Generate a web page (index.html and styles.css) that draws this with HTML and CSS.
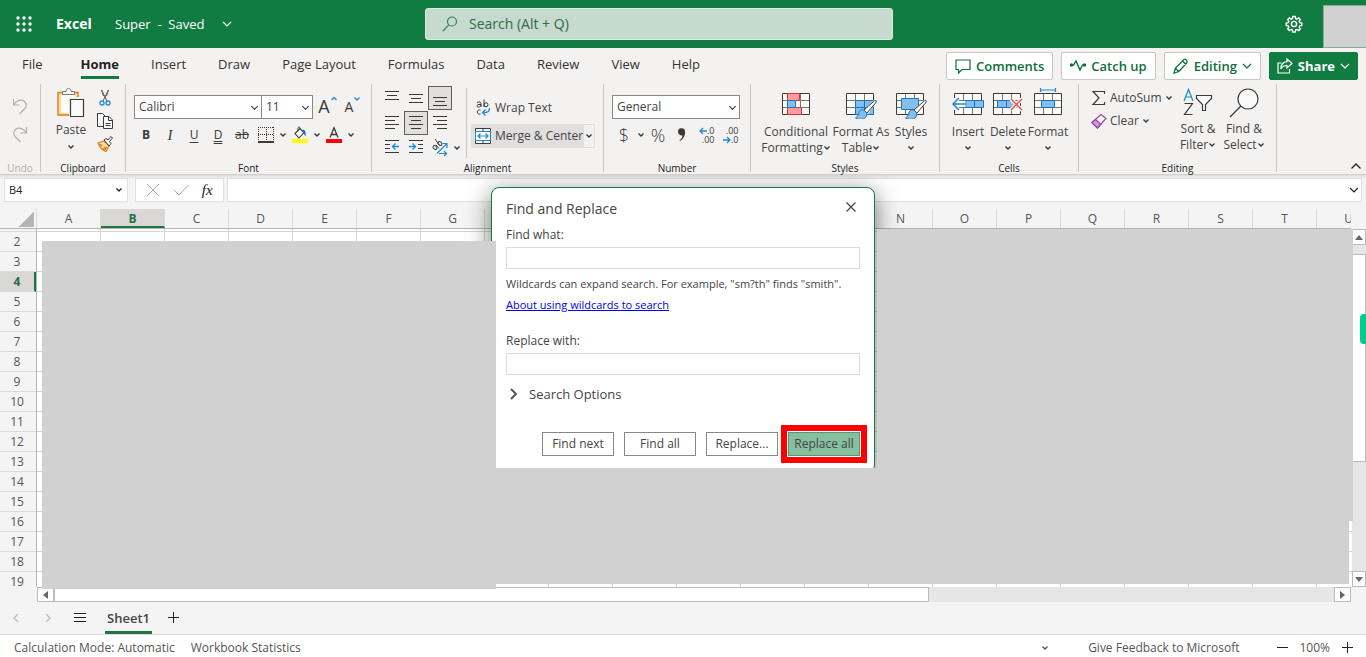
FILE: index.html
```html
<!DOCTYPE html>
<html lang="en">
<head>
<meta charset="utf-8">
<meta name="viewport" content="width=device-width, initial-scale=1">
<title>Super - Excel</title>
<link rel="stylesheet" href="styles.css">
</head>
<body>
<svg class="defs" aria-hidden="true">
  <symbol id="chev" viewBox="0 0 8 8"><path d="M1.5 2.5 4 5l2.5-2.5" fill="none" stroke="currentColor" stroke-width="1.3"/></symbol>
  <symbol id="chev-lg" viewBox="0 0 10 10"><path d="M1 3l4 4 4-4" fill="none" stroke="currentColor" stroke-width="1.2"/></symbol>
  <symbol id="table" viewBox="0 0 30 30"><path d="M1.5 4.500h27v21h-27z" fill="#fafafa"/><path d="M1.500 11.500h27M1.500 18.500h27M10.500 4.500v21M19.500 4.500v21" fill="none" stroke="#797774"/><path d="M1.500 4.500h27v21h-27z" fill="none" stroke="#3a3a38"/></symbol>
  <symbol id="brush" viewBox="0 0 32 30"><path d="M31 9 17 23l4 4 11-14z" fill="#f3f2f1"/><path d="M30.500 11.500c1.200 0 1 1.200 0 2.500l-8.500 10-3-3 9-8c1-.8 2-1.500 2.500-1.500z" fill="#fff" stroke="#3a3a38"/><path d="M18.500 21c-4-.5-4.500 2-5 4-.4 1.700-1.500 3-3 4 4 2.500 9.500 1.500 11-2 .9-2.500-.5-5-3-6z" fill="#83beec" stroke="#1c75bc"/></symbol>
</svg>

<header class="topbar">
  <button class="waffle" aria-label="App launcher"><svg width="16" height="16" viewBox="0 0 16 16" fill="#fff"><circle cx="2" cy="2" r="1.700"/><circle cx="8" cy="2" r="1.700"/><circle cx="14" cy="2" r="1.700"/><circle cx="2" cy="8" r="1.700"/><circle cx="8" cy="8" r="1.700"/><circle cx="14" cy="8" r="1.700"/><circle cx="2" cy="14" r="1.700"/><circle cx="8" cy="14" r="1.700"/><circle cx="14" cy="14" r="1.700"/></svg></button>
  <span class="app">Excel</span>
  <button class="doc"><span>Super&nbsp; -&nbsp; Saved</span><svg width="10" height="10"><use href="#chev-lg"/></svg></button>
  <label class="search"><svg width="16" height="16" viewBox="0 0 16 16" fill="none" stroke="#3e7d57" stroke-width="1.200"><circle cx="10" cy="5.500" r="4.500"/><path d="M6.800 8.800 1 15"/></svg><input type="text" aria-label="Search" placeholder="Search (Alt + Q)"></label>
  <button class="gear" aria-label="Settings"><svg width="18" height="18" viewBox="0 0 18 18" fill="none" stroke="#fff" stroke-width="1.400"><path d="M7.800 1.500h2.400l.4 2 1.300.6 1.800-1.100 1.600 1.600-1.100 1.800.6 1.300 2 .4v2.400l-2 .4-.6 1.300 1.100 1.800-1.600 1.600-1.800-1.100-1.300.6-.4 2H7.800l-.4-2-1.300-.6-1.800 1.100L2.700 14l1.100-1.800-.6-1.300-2-.4V8.100l2-.4.6-1.300-1.100-1.800L4.300 3l1.800 1.100 1.300-.6z"/><circle cx="9" cy="9" r="2.600"/></svg></button>
  <div class="account"></div>
</header>

<nav class="tabs">
  <a class="file" href="#">File</a><a class="on" href="#">Home</a><a href="#">Insert</a><a href="#">Draw</a><a href="#">Page Layout</a><a href="#">Formulas</a><a href="#">Data</a><a href="#">Review</a><a href="#">View</a><a href="#">Help</a>
  <div class="actions">
    <button class="act"><svg width="16" height="16" viewBox="0 0 16 16" fill="none" stroke="currentColor" stroke-width="1.200"><path d="M1 2h14v9.500H7L3.500 15v-3.500H1z"/></svg>Comments</button>
    <button class="act"><svg width="16" height="16" viewBox="0 0 16 16" fill="none" stroke="currentColor" stroke-width="1.400"><path d="M1 7h2.500L6 3l4 9 2.500-5H15"/><circle cx="1.500" cy="7" r="1" fill="currentColor"/><circle cx="14.500" cy="7" r="1" fill="currentColor"/></svg>Catch up</button>
    <button class="act"><svg width="16" height="16" viewBox="0 0 16 16" fill="none" stroke="currentColor" stroke-width="1.300"><path d="M1 15l1.500-5L11 1.500c1-1 4 1.500 3 3L6 13.500zM9.500 3l3.500 3.500M2.500 10.500 5.800 13.500"/></svg>Editing<svg width="10" height="10"><use href="#chev-lg"/></svg></button>
    <button class="act share"><svg width="16" height="16" viewBox="0 0 16 16" fill="none" stroke="currentColor" stroke-width="1.200"><path d="M4.500 5H1v10h11.500v-4M10 1l5 4.500-5 4.500V7.500C7 7.500 5 8.500 3.800 11 4 7 6 4 10 3.700z"/></svg>Share<svg width="10" height="10"><use href="#chev-lg"/></svg></button>
  </div>
</nav>

<div class="ribbon">
  <section class="group g-undo">
    <div class="body">
      <button aria-label="Undo"><svg width="18" height="18" viewBox="0 0 18 18" fill="none" stroke="#b3b0ad" stroke-width="1.200"><path d="M2.500 2v6h6M2.500 8c3-5 8-6 11-3.500 3 3 2 5.500 0 7.500L8.500 17"/></svg></button>
      <button aria-label="Redo"><svg width="18" height="18" viewBox="0 0 18 18" fill="none" stroke="#b3b0ad" stroke-width="1.200"><path d="M15.500 2v6h-6M15.500 8c-3-5-8-6-11-3.500-3 3-2 5.500 0 7.500l5 5"/></svg></button>
    </div>
    <h2>Undo</h2>
  </section>

  <section class="group g-clip">
    <div class="body">
      <button class="big"><svg width="30" height="32" viewBox="0 0 30 32"><path d="M2 5.500h20V28H2z" fill="#fbdd8f" stroke="#e07b1a" stroke-width="1.400"/><path d="M5 8h14v18H5z" fill="#fafafa"/><path d="M6.500 7.500v-3h3.500c0-4 5-4 5 0h3.500v3z" fill="#fafafa" stroke="#797774"/><path d="M13 10h17v20H13z" fill="#f3f2f1"/><path d="M14.500 12.500h13v17h-13z" fill="#fafafa" stroke="#3a3a38" stroke-width="1.200"/></svg><span>Paste</span><svg class="c" width="8" height="8"><use href="#chev"/></svg></button>
      <div class="stack">
        <button aria-label="Cut"><svg width="16" height="16" viewBox="0 0 16 16" fill="none" stroke="#555"><path d="M4.500 0 10 11M11.500 0 6 11"/><path d="M4.500 0l2 6M11.500 0l-2 6"/><circle cx="5" cy="13" r="2" stroke="#1e8bcd" stroke-width="1.300"/><circle cx="11" cy="13" r="2" stroke="#1e8bcd" stroke-width="1.300"/></svg></button>
        <button aria-label="Copy"><svg width="18" height="18" viewBox="0 0 18 18" fill="#fafafa" stroke="#3a3a38"><path d="M7.500 14.500h-6v-13h5l3 3"/><path d="M7.500 4.500h5.500l3.500 3.500v8.500h-9zM12.500 4.500v4h4M9.500 11.500h5M9.500 13.500h5"/></svg></button>
        <button aria-label="Format Painter"><svg width="16" height="16" viewBox="0 0 16 16"><path d="M1 7l6-2 5 5-3 5.500C5 14 3 12 1 7z" fill="#fbe3a4" stroke="#e07b1a" stroke-width="1.200"/><path d="M5 13l4-3 1 2-2 3zM1 7l5 2-2 2z" fill="#e8832a"/><path d="M7 4l2-1.500 2 1.500 3-3.500 1.500 1.500L12.500 5.500l1.500 2-2 2.500z" fill="#fafafa" stroke="#3a3a38"/></svg></button>
      </div>
    </div>
    <h2>Clipboard</h2>
  </section>

  <section class="group g-font">
    <div class="body">
      <div class="line top">
        <span class="sel name"><select aria-label="Font"><option>Calibri</option></select></span><span class="sel size"><select aria-label="Font size"><option>11</option></select></span>
        <button class="ib grow" aria-label="Grow font"><b>A</b><svg width="8" height="8" viewBox="0 0 8 8"><path d="M1.500 5 4 2.500 6.500 5" fill="none" stroke="#1e8bcd" stroke-width="1.300"/></svg></button>
        <button class="ib grow small" aria-label="Shrink font"><b>A</b><svg class="blue" width="8" height="8"><use href="#chev"/></svg></button>
      </div>
      <div class="line">
        <button class="ib bold">B</button><button class="ib ital">I</button><button class="ib und">U</button><button class="ib dbl">D</button><button class="ib strike">ab</button>
        <button class="ib" aria-label="Borders"><svg width="16" height="16" viewBox="0 0 16 16" fill="none" stroke="#3a3a38"><path d="M.5 0v14M15.500 0v14M8.500 0v14M0 .5h16M0 7.500h16" stroke-dasharray="1 1" shape-rendering="crispEdges"/><path d="M0 15h16" stroke="#000" stroke-width="1.500"/></svg></button>
        <svg class="c n" width="8" height="8"><use href="#chev"/></svg>
        <button class="ib" aria-label="Fill colour"><svg width="16" height="16" viewBox="0 0 16 16"><path d="M3 6.500 8 1.500l4 4-5 5.500z" fill="#fafafa" stroke="#3a3a38" stroke-width="1.100"/><path d="M6 4V1.500C6-.5 8-.5 8 1.500" fill="none" stroke="#3a3a38"/><path d="M10.500 2.500c3 0 3.500 3 3 7-1-1-1.500-3-3-4.500z" fill="#1670b8"/><path d="M0 12h16v4H0z" fill="#ff0"/></svg></button>
        <svg class="c n" width="8" height="8"><use href="#chev"/></svg>
        <button class="ib" aria-label="Font colour"><svg width="16" height="16" viewBox="0 0 16 16"><path d="M4 10.500 8 .8l4 9.700M5.500 7.500h5" fill="none" stroke="#3a3a38" stroke-width="1.300"/><path d="M0 12h16v4H0z" fill="#f00"/></svg></button>
        <svg class="c n" width="8" height="8"><use href="#chev"/></svg>
      </div>
    </div>
    <h2>Font</h2>
  </section>

  <section class="group g-align">
    <div class="body">
      <div class="aligns">
        <button class="ib" aria-label="Top align"><svg width="16" height="16" viewBox="0 0 16 16" stroke="#3a3a38"><path d="M1 1.500h14M3 5.500h10M1 9.500h14"/></svg></button>
        <button class="ib" aria-label="Middle align"><svg width="16" height="16" viewBox="0 0 16 16" stroke="#3a3a38"><path d="M1 4.500h14M3 8.500h10M1 12.500h14"/></svg></button>
        <button class="ib pressed" aria-label="Bottom align"><svg width="16" height="16" viewBox="0 0 16 16" stroke="#3a3a38"><path d="M1 7.500h14M3 11.500h10M1 15.500h14"/></svg></button>
        <button class="ib" aria-label="Align left"><svg width="16" height="16" viewBox="0 0 16 16" stroke="#3a3a38"><path d="M1 1.500h14M1 5.500h10M1 9.500h14M1 13.500h10"/></svg></button>
        <button class="ib pressed" aria-label="Centre"><svg width="16" height="16" viewBox="0 0 16 16" stroke="#3a3a38"><path d="M1 1.500h14M3 5.500h10M1 9.500h14M3 13.500h10"/></svg></button>
        <button class="ib" aria-label="Align right"><svg width="16" height="16" viewBox="0 0 16 16" stroke="#3a3a38"><path d="M1 1.500h14M5 5.500h10M1 9.500h14M5 13.500h10"/></svg></button>
        <button class="ib" aria-label="Decrease indent"><svg width="16" height="16" viewBox="0 0 16 16" fill="none" stroke="#3a3a38"><path d="M1 .5h14M1 4.500h5M1 8.500h5M1 12.500h14"/><path d="M15 6.500H9M11.500 3.500l-3 3 3 3" stroke="#1e8bcd" stroke-width="1.300"/></svg></button>
        <button class="ib" aria-label="Increase indent"><svg width="16" height="16" viewBox="0 0 16 16" fill="none" stroke="#3a3a38"><path d="M1 .5h14M10 4.500h5M10 8.500h5M1 12.500h14"/><path d="M1 6.500h6M4.500 3.500l3 3-3 3" stroke="#1e8bcd" stroke-width="1.300"/></svg></button>
        <button class="ib" aria-label="Orientation"><svg width="18" height="18" viewBox="0 0 18 18" fill="none" stroke="#3a3a38"><ellipse cx="4" cy="8.500" rx="1.700" ry="2.200" transform="rotate(-45 4 8.500)"/><path d="M4.800 5.800 8 9.500"/><ellipse cx="9" cy="4.500" rx="1.700" ry="2.200" transform="rotate(-45 9 4.500)"/><path d="M4 0l4.500 6.500"/><path d="M6 14.500 16 4.500M11.500 4.500H16V9M8 14.500h7M13 12l2.500 2.500L13 17" stroke="#1e8bcd" stroke-width="1.200"/></svg></button>
        <svg class="c n" width="8" height="8"><use href="#chev"/></svg>
      </div>
      <div class="wraps">
        <button class="wide"><svg width="16" height="18" viewBox="0 0 16 18" fill="none" stroke="#3a3a38"><path d="M2 3.500c3-1.500 4 0 4 1V8M6 5.500c-5-.5-5 2.500-2.500 2.500 1.500 0 2.500-1 2.500-2"/><path d="M9 .5V8"/><circle cx="11" cy="5.800" r="2"/><path d="M5.500 11c-4-1.500-4 5.500 0 4"/><path d="M14.500 9c0 4-2 4.500-6 4.500M10.500 10.500l-3 3 3 3" stroke="#1e8bcd" stroke-width="1.300"/></svg>Wrap Text</button>
        <div class="merge">
          <button class="wide"><svg width="16" height="16" viewBox="0 0 16 16" fill="none"><path d="M.5.500h15v15H.5z" fill="#fafafa" stroke="#3a3a38"/><path d="M0 3.500h16M0 12.500h16M8 0v4M8 12v4" stroke="#3a3a38"/><path d="M.5 3.500h15v9H.5z" fill="#fff" stroke="#1e8bcd"/><path d="M3 8h10M5.500 5.500 3 8l2.500 2.500M10.500 5.500 13 8l-2.500 2.500" stroke="#1e8bcd" stroke-width="1.200"/></svg>Merge &amp; Center</button>
          <button class="drop" aria-label="Merge options"><svg class="c" width="8" height="8"><use href="#chev"/></svg></button>
        </div>
      </div>
    </div>
    <h2>Alignment</h2>
  </section>

  <section class="group g-num">
    <div class="body">
      <div class="line top"><span class="sel fmt"><select aria-label="Number format"><option>General</option></select></span></div>
      <div class="line">
        <button class="ib sym">$</button><svg class="c n" width="8" height="8"><use href="#chev"/></svg>
        <button class="ib sym">%</button>
        <button class="ib" aria-label="Comma style"><svg width="10" height="14" viewBox="0 0 10 14"><path d="M1 4a3.500 3.500 0 0 1 7-.5c.5 4-2 8-5 9.500l-.5-1c2-1 3-3 3-4.800C3 8 1 6 1 4z" fill="#3a3a38"/></svg></button>
        <button class="ib dec" aria-label="Increase decimal"><span><svg width="8" height="8" viewBox="0 0 8 8" fill="none" stroke="#1e8bcd" stroke-width="1.300"><path d="M8 4H1M4 1 1 4l3 3"/></svg>.0</span><span>.00</span></button>
        <button class="ib dec" aria-label="Decrease decimal"><span>.00</span><span><svg width="8" height="8" viewBox="0 0 8 8" fill="none" stroke="#1e8bcd" stroke-width="1.300"><path d="M0 4h7M4 1l3 3-3 3"/></svg>.0</span></button>
      </div>
    </div>
    <h2>Number</h2>
  </section>

  <section class="group g-styles">
    <div class="body">
      <button class="big w70"><svg width="30" height="30" viewBox="0 0 30 30"><use href="#table"/><path d="M6.500 4.500h12v7h-12zM6.500 18.500h14v7h-14z" fill="#ff9ba3" stroke="#d8342f"/><path d="M6.500 11.500h8v7h-8z" fill="#83beec" stroke="#1c75bc"/></svg><span>Conditional<br>Formatting<svg class="c" width="8" height="8"><use href="#chev"/></svg></span></button>
      <button class="big w60"><svg width="32" height="30" viewBox="0 0 32 30"><use href="#table" width="30" height="30"/><path d="M10.500 11.500h18v14h-18z" fill="#83beec"/><path d="M10.500 11.500h18v14h-18zM19.500 11.500v14M10.500 18.500h18" fill="none" stroke="#1c75bc"/><use href="#brush" width="32" height="30"/></svg><span>Format As<br>Table<svg class="c" width="8" height="8"><use href="#chev"/></svg></span></button>
      <button class="big w40"><svg width="32" height="30" viewBox="0 0 32 30"><use href="#table" width="30" height="30"/><path d="M6.500 9.500h17v11h-17z" fill="#83beec" stroke="#1c75bc"/><use href="#brush" width="32" height="30"/></svg><span>Styles</span><svg class="c" width="8" height="8"><use href="#chev"/></svg></button>
    </div>
    <h2>Styles</h2>
  </section>

  <section class="group g-cells">
    <div class="body">
      <button class="big w40"><svg width="32" height="30" viewBox="0 0 32 30"><use href="#table" x="1" width="30" height="30"/><path d="M12.500 11.500h19v7h-19zM22.500 11.500v7" fill="#83beec" stroke="#1c75bc"/><path d="M0 9h7v12H0z" fill="#f3f2f1"/><path d="M6 12h7v6H6z" fill="#fff"/><path d="M14 15H1M7 9l-6 6 6 6" fill="none" stroke="#1e8bcd" stroke-width="1.500"/></svg><span>Insert</span><svg class="c" width="8" height="8"><use href="#chev"/></svg></button>
      <button class="big w40"><svg width="32" height="30" viewBox="0 0 32 30"><use href="#table" width="30" height="30"/><path d="M5.500 11.500h9v7h-9zM14.500 11.500h5l3 3.500-3 3.500h-5z" fill="#83beec" stroke="#1c75bc"/><path d="M19 10l11 11M30 10 19 21" stroke="#f3f2f1" stroke-width="4"/><path d="M19 10l11 11M30 10 19 21" stroke="#e8514c" stroke-width="1.400"/></svg><span>Delete</span><svg class="c" width="8" height="8"><use href="#chev"/></svg></button>
      <button class="big w40"><svg width="30" height="30" viewBox="0 0 30 30"><use href="#table"/><path d="M8.500 11.500h13v7h-13z" fill="#83beec" stroke="#1c75bc"/><path d="M7.500-1v4M22.500-1v4M7 1h15" stroke="#1e8bcd" stroke-width="1.200"/></svg><span>Format</span><svg class="c" width="8" height="8"><use href="#chev"/></svg></button>
    </div>
    <h2>Cells</h2>
  </section>

  <section class="group g-edit">
    <div class="body">
      <div class="sums">
        <button class="wide"><svg width="16" height="16" viewBox="0 0 16 16" fill="none" stroke="#3a3a38" stroke-width="1.200"><path d="M13.500 4V1.500H2L8 8l-6 6.500h11.500V12"/></svg>AutoSum<svg class="c" width="8" height="8"><use href="#chev"/></svg></button>
        <button class="wide"><svg width="16" height="16" viewBox="0 0 16 16" stroke="#9a3fa5" stroke-width="1.200"><path d="M1 9.500 10 1.500l5 4L6.500 15z" fill="#fafafa"/><path d="M1 9.500 4.500 6.500 9.800 11.200 6.500 15z" fill="#d59adb"/></svg>Clear<svg class="c" width="8" height="8"><use href="#chev"/></svg></button>
      </div>
      <button class="big w46"><svg width="30" height="30" viewBox="0 0 30 30" fill="none" stroke="#3a3a38" stroke-width="1.200"><path d="M1 13 5.500 1.500 10 13M2.500 9h6" stroke="#1e8bcd"/><path d="M1.500 15.500h8l-8 11h8"/><path d="M13.500 7.500h15v3l-6 6v6h-3v-6l-6-6z" fill="#fafafa"/></svg><span>Sort &amp;<br>Filter<svg class="c" width="8" height="8"><use href="#chev"/></svg></span></button>
      <button class="big w46"><svg width="30" height="30" viewBox="0 0 30 30" fill="none" stroke="#3a3a38" stroke-width="1.200"><circle cx="19" cy="11" r="10" fill="#fafafa"/><path d="M12 18 1 29"/></svg><span>Find &amp;<br>Select<svg class="c" width="8" height="8"><use href="#chev"/></svg></span></button>
    </div>
    <h2>Editing</h2>
  </section>
  <button class="collapse" aria-label="Collapse ribbon"><svg width="12" height="8" viewBox="0 0 12 8"><path d="M1.500 6.500 6 2l4.500 4.500" fill="none" stroke="#222" stroke-width="1.300"/></svg></button>
</div>

<div class="fbar">
  <label class="namebox"><input type="text" aria-label="Name box" value="B4"><svg width="8" height="8"><use href="#chev"/></svg></label>
  <div class="fbtns">
    <button aria-label="Cancel"><svg width="14" height="14" viewBox="0 0 14 14" stroke="#aaa"><path d="M1 1l12 12M13 1 1 13"/></svg></button>
    <button aria-label="Enter"><svg width="16" height="14" viewBox="0 0 16 14" fill="none" stroke="#aaa"><path d="M1 7l5 5L15.500 2"/></svg></button>
    <button class="fx">fx</button>
  </div>
  <label class="formula"><input type="text" aria-label="Formula bar"><svg width="10" height="10"><use href="#chev-lg"/></svg></label>
</div>

<main class="sheet">
  <div class="colhead">
    <div class="corner"></div>
    <div>A</div><div class="cur">B</div><div>C</div><div>D</div><div>E</div><div>F</div><div>G</div><div></div><div></div><div></div><div></div><div></div><div></div><div>N</div><div>O</div><div>P</div><div>Q</div><div>R</div><div>S</div><div>T</div><div>U</div>
  </div>
  <div class="middle">
    <div class="rowhead"><div class="stub"></div><div>2</div><div>3</div><div class="cur">4</div><div>5</div><div>6</div><div>7</div><div>8</div><div>9</div><div>10</div><div>11</div><div>12</div><div>13</div><div>14</div><div>15</div><div>16</div><div>17</div><div>18</div><div>19</div></div>
    <div class="cells"></div>
    <div class="vscroll"><button aria-label="Scroll up"><i class="up"></i></button><div class="thumb"></div><button aria-label="Scroll down"><i class="down"></i></button></div>
  </div>
  <div class="hscroll"><button aria-label="Scroll left"><i class="left"></i></button><div class="thumb"></div><button aria-label="Scroll right"><i class="right"></i></button></div>

  <div class="dialog" role="dialog" aria-labelledby="dlg-title">
    <div class="dhead"><h1 id="dlg-title">Find and Replace</h1><button aria-label="Close"><svg width="10" height="10" viewBox="0 0 10 10" stroke="#444" stroke-width="1.200"><path d="M.5.500l9 9M9.500.500l-9 9"/></svg></button></div>
    <label for="find">Find what:</label>
    <input id="find" type="text">
    <p>Wildcards can expand search. For example, "sm?th" finds "smith".</p>
    <a href="#">About using wildcards to search</a>
    <label class="rep" for="replace">Replace with:</label>
    <input id="replace" type="text">
    <button class="opts"><svg width="8" height="12" viewBox="0 0 8 12"><path d="M1 1l5 5-5 5" fill="none" stroke="#555" stroke-width="2"/></svg>Search Options</button>
    <div class="dbtns"><button>Find next</button><button>Find all</button><button>Replace...</button><button class="primary">Replace all</button></div>
  </div>
  <div class="mask m-left"></div>
  <div class="mask m-right"></div>
  <div class="mask m-low"></div>
  <div class="pill"></div>
</main>

<div class="sheettabs">
  <button aria-label="Previous sheet"><svg width="8" height="10" viewBox="0 0 8 10"><path d="M6 1 2 5l4 4" fill="none" stroke="#bbb" stroke-width="1.200"/></svg></button>
  <button aria-label="Next sheet"><svg width="8" height="10" viewBox="0 0 8 10"><path d="M2 1l4 4-4 4" fill="none" stroke="#bbb" stroke-width="1.200"/></svg></button>
  <button aria-label="All sheets"><svg width="12" height="10" viewBox="0 0 12 10" stroke="#222"><path d="M0 .5h12M0 4.500h12M0 8.500h12"/></svg></button>
  <button class="tab">Sheet1</button>
  <button aria-label="New sheet"><svg width="12" height="12" viewBox="0 0 12 12" stroke="#222"><path d="M0 5.500h11M5.500 0v11"/></svg></button>
</div>
<footer class="status">
  <span>Calculation Mode: Automatic</span><span>Workbook Statistics</span>
  <svg class="mid" width="8" height="8"><use href="#chev"/></svg>
  <span class="feed">Give Feedback to Microsoft</span>
  <button aria-label="Zoom out"><svg width="12" height="12" viewBox="0 0 12 12" stroke="#222"><path d="M0 5.500h11"/></svg></button>
  <span class="zoom">100%</span>
  <button aria-label="Zoom in"><svg width="12" height="12" viewBox="0 0 12 12" stroke="#222"><path d="M0 5.500h11M5.500 0v11"/></svg></button>
</footer>
</body>
</html>
```
FILE: styles.css
```css
*{box-sizing:border-box}
html,body{height:100%}
body{margin:0;display:flex;flex-direction:column;overflow:hidden;background:#f4f4f4;color:#444;font:12px/16px "Open Sans","Noto Sans",sans-serif}
.defs{position:absolute;width:0;height:0}
button{border:0;padding:0;background:none;color:inherit;font:inherit;display:flex;align-items:center;justify-content:center}
input,select{font:inherit;color:inherit;border:0;padding:0;background:none;outline:0;min-width:0}
svg{display:block;flex:none;overflow:visible}
h1,h2,p{margin:0;font-weight:400}
a{color:inherit;text-decoration:none}

/* title bar */
.topbar{height:48px;flex:none;display:flex;align-items:center;background:#107c41;color:#fff;font-size:13px;position:relative}
.waffle{width:48px;height:48px}
.app{margin-left:8px;width:59px;font-size:14px;font-weight:700}
.doc{gap:18px}
.search{position:absolute;left:50%;margin-left:-258px;width:468px;max-width:50%;height:32px;display:flex;align-items:center;gap:11px;padding:0 16px;background:#c6dacd;border:1px solid #dceae1;border-radius:3px;font-size:14px}
.search input{flex:1}
.search input::placeholder{color:#2f6b47;opacity:1}
.gear{margin-left:auto;width:48px;height:48px;margin-right:5px}
.account{width:43px;height:43px;background:#d1d1d1;border:1px solid #7fae92;border-right:0;align-self:flex-end}

/* ribbon tabs */
.tabs{height:36px;flex:none;display:flex;align-items:flex-start;gap:32px;padding:0 8px 0 22px;background:#f3f2f1;color:#333;font-size:13px}
.tabs>a{height:31px;line-height:32px}
.tabs .file{margin-right:6px}
.tabs .on{font-weight:700;color:#222;border-bottom:3px solid #107c41}
.actions{margin-left:auto;padding-top:4px;display:flex;gap:8px}
.act{height:28px;padding:0 8px;gap:5px;background:#fff;border:1px solid #c8c6c4;border-radius:2px;color:#0f6e39;font-weight:600}
.act.share{background:#107c41;border-color:#107c41;color:#fff;font-weight:700;padding:0 7px}

/* ribbon */
.ribbon{flex:none;height:91px;display:flex;background:#f3f2f1;border-bottom:1px solid #d2d0ce;box-shadow:0 2px 3px rgba(0,0,0,.1);z-index:1}
.group{flex:none;display:flex;flex-direction:column;height:88px;border-right:1px solid #c8c6c4}
.group .body{flex:none;height:77px;display:flex}
.group h2{font-size:10px;line-height:14px;text-align:center;color:#222}
.c{color:#333}
.line{display:flex;align-items:center;height:24px}
.line.top{margin:11px 0 4px}
.ib{width:24px;height:24px;flex:none;color:#3a3a38}
.n{margin:0 1px;align-self:center}
.big{flex-direction:column;justify-content:flex-start;padding-top:5px;line-height:16px;white-space:nowrap;font-size:12px}
.big span{margin:5px 0 4px;text-align:center}
.big span .c{display:inline-block}
.wide{gap:4px;height:24px;white-space:nowrap}
.w70{width:70px}.w60{width:60px}.w40{width:40px}.w46{width:46px}
.g-undo{width:41px}
.g-undo .body{flex-direction:column;align-items:center;gap:10px;padding-top:13px}
.g-undo h2{color:#b3b0ad}
.g-clip{width:85px}
.g-clip .body{padding-left:15px;gap:5px}
.g-clip .big{width:30px;padding-top:3px}
.g-clip .big span{margin:3px 0 5px}
.stack{padding-top:2px;width:28px}
.stack button{width:28px;height:23px}
.g-font{width:246px}
.g-font .body,.g-num .body{flex-direction:column;padding-left:8px}
.sel{display:block;height:24px;border:1px solid #8a8886;background:#fff;position:relative}
.sel select{width:100%;height:100%;padding-left:4px;appearance:none}
.sel::after{content:"";position:absolute;right:4px;top:8px;width:4px;height:4px;border:solid #333;border-width:0 1px 1px 0;transform:rotate(45deg);pointer-events:none}
.sel.name{width:128px}.sel.size{width:51px;border-left:0}.sel.fmt{width:128px}
.grow{margin-left:3px;align-items:flex-start;line-height:22px}
.grow b{font-size:18px;font-weight:400}
.grow+.grow{margin-left:1px}
.grow.small b{font-size:14px;line-height:24px}
.blue{color:#1e8bcd}
.bold{font-weight:700}
.ital{font-style:italic;font-family:"Liberation Serif",serif;font-size:15px}
.und{text-decoration:underline;text-underline-offset:3px}
.dbl{text-decoration:underline double;text-underline-offset:2px}
.strike{text-decoration:line-through}
.g-align{width:232px}
.g-align .body{padding-left:8px}
.aligns{display:grid;grid-template-columns:repeat(3,24px) 10px;grid-auto-rows:24px;gap:1px 0;padding-top:2px}
.aligns .ib:nth-child(3n+1){grid-column:1}
.pressed{background:#e1dfdd;border:1px solid #605e5c}
.wraps{margin:4px 0 0 4px;padding:8px 0 0 4px;border-left:1px solid #c8c6c4;height:70px;display:flex;flex-direction:column;gap:4px}
.wraps>.wide{align-self:flex-start;padding-left:4px}
.merge{display:flex;background:#e1dfdd}
.merge .wide{padding:0 0 0 4px}
.merge .drop{width:12px;border:1px solid #e1dfdd;background:#f3f2f1}
.g-num{width:147px}
.sym{font-size:18px;font-weight:300}
.dec{flex-direction:column;font-size:9px;line-height:9px}
.dec span{display:flex;align-items:center;justify-content:flex-end;width:17px}
.g-styles{width:189px}
.g-styles .body{padding-left:10px}
.g-cells{width:139px}
.g-cells .body{padding-left:8px}
.g-edit{width:198px}
.g-edit .body{padding-left:12px}
.sums{width:84px;padding-top:2px;display:flex;flex-direction:column;align-items:flex-start}
.sums .wide{height:23px;gap:3px}
.g-edit .big{padding-top:4px}
.g-edit .big span{margin-top:3px}
.collapse{margin:auto 4px 4px auto}

/* formula bar */
.fbar{flex:none;height:34px;display:flex;padding:3px 4px 0;gap:7px;background:#f4f4f4}
.namebox,.fbtns,.formula{display:flex;align-items:center;height:24px;background:#fff;border:1px solid #e1e1e1}
.namebox{width:124px;padding:0 4px;color:#222}
.namebox input{flex:1;font-size:11px}
.fbtns{width:89px;justify-content:space-around;padding:0 4px}
.fx{font:italic 15px "Liberation Serif",serif;color:#222}
.formula{flex:1;margin-left:-4px;padding:0 2px;color:#222}
.formula input{flex:1}

/* grid */
.sheet{flex:1;min-height:0;display:flex;flex-direction:column;position:relative}
.colhead{flex:none;height:20px;display:flex;overflow:hidden;margin-right:15px;border-bottom:1px solid #b5b5b5;line-height:20px;text-align:center;color:#555}
.colhead div{flex:none;width:64px;border-right:1px solid #dadada}
.colhead .corner{width:37px;background:linear-gradient(135deg,transparent 50%,#b5b5b5 50%) 19px 3px/15px 15px no-repeat}
.colhead .cur,.rowhead .cur{background:#d9d8d6;color:#217346;font-weight:700}
.colhead .cur{border-bottom:2px solid #217346}
.middle{flex:1;min-height:0;display:flex}
.rowhead{width:37px;flex:none;overflow:hidden;border-right:1px solid #b5b5b5;text-align:center;color:#555;line-height:20px}
.rowhead div{height:20px;border-bottom:1px solid #dadada;padding-right:2px}
.rowhead .stub{height:3px}
.rowhead .cur{border-right:2px solid #217346;padding:0}
.cells{flex:1;background:linear-gradient(90deg,transparent 63px,#d4d4d4 63px) 0 0/64px 100%,linear-gradient(transparent 19px,#d4d4d4 19px) 0 3px/100% 20px,#fff}
.vscroll{width:14px;flex:none;display:flex;flex-direction:column;justify-content:space-between;background:#e6e6e6}
.vscroll button,.hscroll button{width:14px;height:16px;background:#fff;border:1px solid #bbb}
.vscroll .thumb{height:208px;margin:9px 0 auto;background:#fff;border:1px solid #bbb}
.hscroll{flex:none;height:15px;display:flex;margin:0 15px 0 37px;background:#e6e6e6}
.hscroll button{width:17px;height:15px}
.hscroll .thumb{width:calc(66% + 8px);margin-right:auto;background:#fff;border:1px solid #bbb}
i{border:4px solid transparent}
.up{border-top:0;border-bottom:5px solid #666}
.down{border-bottom:0;border-top:5px solid #666}
.left{border-left:0;border-right:5px solid #666}
.right{border-right:0;border-left:5px solid #666}

/* find and replace */
.dialog{position:absolute;left:491px;top:-22px;width:384px;height:286px;padding:12px 14px 0;background:#fff;border:1px solid #107c41;border-radius:8px;box-shadow:0 6px 24px rgba(0,0,0,.55);display:flex;flex-direction:column;align-items:flex-start}
.dhead{align-self:stretch;display:flex;justify-content:space-between;padding-right:4px;height:18px;margin-bottom:9px}
.dhead h1{font-size:14px;line-height:18px}
.dhead button{height:14px}
.dialog input{align-self:stretch;height:22px;margin:4px 0 7px;border:1px solid #dcdcdc}
.dialog p,.dialog a{font-size:11px}
.dialog p{white-space:nowrap;margin-bottom:5px}
.dialog a{color:#00e;text-decoration:underline}
.dialog .rep{margin-top:20px}
.opts{font-size:13px;gap:11px;margin:3px 0 29px 4px;height:18px}
.dbtns{align-self:stretch;display:flex;justify-content:flex-end;gap:10px}
.dbtns button{width:72px;height:24px;border:1px solid #8a8886;white-space:nowrap}
.dbtns .primary{background:#86bf9f;border-color:#4f9b70;outline:6px solid #f00;outline-offset:1px}
.mask{position:absolute;background:#d1d1d1}
.m-left{left:42px;width:454px;top:32px;bottom:13px}
.m-right{left:877px;right:13px;top:20px;bottom:81px}
.m-low{left:496px;right:17px;top:259px;bottom:18px}
.pill{position:absolute;right:0;top:105px;width:6px;height:30px;background:#00cc8e;border-radius:4px 0 0 4px}

/* sheet tabs and status bar */
.sheettabs{flex:none;height:33px;display:flex;align-items:center;padding-left:12px;border-bottom:1px solid #dcdcdc}
.sheettabs button{height:32px;width:8px;margin-right:24px}
.sheettabs button:nth-child(2){margin-right:22px}
.sheettabs button:nth-child(3){width:12px;margin-right:19px}
.sheettabs .tab{width:auto;padding:2px 2px 0;margin-right:18px;border-bottom:3px solid #217346;font-size:13px;font-weight:600}
.status{flex:none;height:22px;display:flex;align-items:center;padding:4px 12px 0 14px;background:#fff;color:#555}
.status span{margin-right:16px}
.status .mid{margin-left:auto;margin-right:39px}
.status .feed{margin-right:38px}
.status .zoom{margin:0 12px 0 10px}
```
